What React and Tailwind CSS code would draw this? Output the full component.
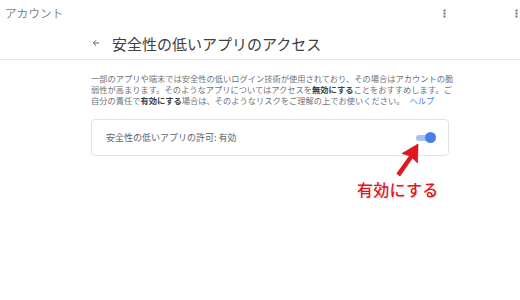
import React from 'react';

const font = { fontFamily: '"Noto Sans CJK JP", "Noto Sans", sans-serif' };

const Dots = () => (
  <svg width="3" height="9" viewBox="0 0 3 9" className="text-[#757575]">
    <rect x="0.5" y="0.5" width="2" height="2" fill="currentColor" />
    <rect x="0.5" y="3.5" width="2" height="2" fill="currentColor" />
    <rect x="0.5" y="6.5" width="2" height="2" fill="currentColor" />
  </svg>
);

const App = () => {
  return (
    <div className="relative w-[520px] h-[300px] bg-white overflow-hidden" style={font}>
      {/* top bar */}
      <div className="flex items-center justify-between h-[27px] pl-[5px] pr-[2px]">
        <span className="text-[11.5px] text-[#80868b] tracking-[0.2px]">アカウント</span>
        <div className="flex items-center gap-[69px]">
          <Dots />
          <Dots />
        </div>
      </div>

      {/* page title */}
      <div className="flex items-center h-[33px] border-b border-[#e6e6e6] pl-[92px]">
        <svg width="8" height="8" viewBox="0 0 8 8" className="text-[#5f6368]">
          <path d="M7 4H1.5M4 1.3L1.3 4L4 6.7" fill="none" stroke="currentColor" strokeWidth="1" />
        </svg>
        <h1 className="ml-[12px] text-[15px] text-[#3c4043] leading-none">安全性の低いアプリのアクセス</h1>
      </div>

      {/* content */}
      <div className="pl-[91px] pt-[13px] w-[470px]">
        <p className="text-[8.25px] leading-[10.8px] text-[#6f7378] whitespace-nowrap">
          一部のアプリや端末では安全性の低いログイン技術が使用されており、その場合はアカウントの脆
          <br />
          弱性が高まります。そのようなアプリについてはアクセスを
          <b className="font-bold text-[#3c4043]">無効にする</b>
          ことをおすすめします。ご
          <br />
          自分の責任で<b className="font-bold text-[#3c4043]">有効にする</b>
          場合は、そのようなリスクをご理解の上でお使いください。
          <span className="ml-[5px] text-[#4a80f0]">ヘルプ</span>
        </p>

        <div className="mt-[14px] w-[358px] h-[37px] border border-[#e3e3e3] rounded-[4px] flex items-center justify-between pl-[14px] pr-[12px]">
          <span className="text-[9px] text-[#5f6368]">安全性の低いアプリの許可: 有効</span>
          <div className="relative w-[20px] h-[11px] flex items-center">
            <div className="w-[18px] h-[6px] rounded-full bg-[#a5c1f7]" />
            <div className="absolute right-0 top-0 w-[11px] h-[11px] rounded-full bg-[#4a7fe9]" />
          </div>
        </div>
      </div>

      {/* annotation */}
      <svg className="absolute left-[394px] top-[141px]" width="28" height="38" viewBox="0 0 28 38">
        <path d="M24 3 L23.5 22 L18.5 17 L6 35 L2.8 32.5 L15.5 14.8 L8 12.5 Z" fill="#e3141b" stroke="#b30d12" strokeWidth="0.6" strokeLinejoin="round" />
      </svg>
      <span
        className="absolute left-[357px] top-[178px] text-[16px] leading-[22px] text-[#e3141b] font-medium tracking-[0.3px]"
        style={{ textShadow: '0 0 2px #fff, 0 0 2px #fff, 1px 1px 1px rgba(0,0,0,0.15)' }}
      >
        有効にする
      </span>
    </div>
  );
};

export default App;
